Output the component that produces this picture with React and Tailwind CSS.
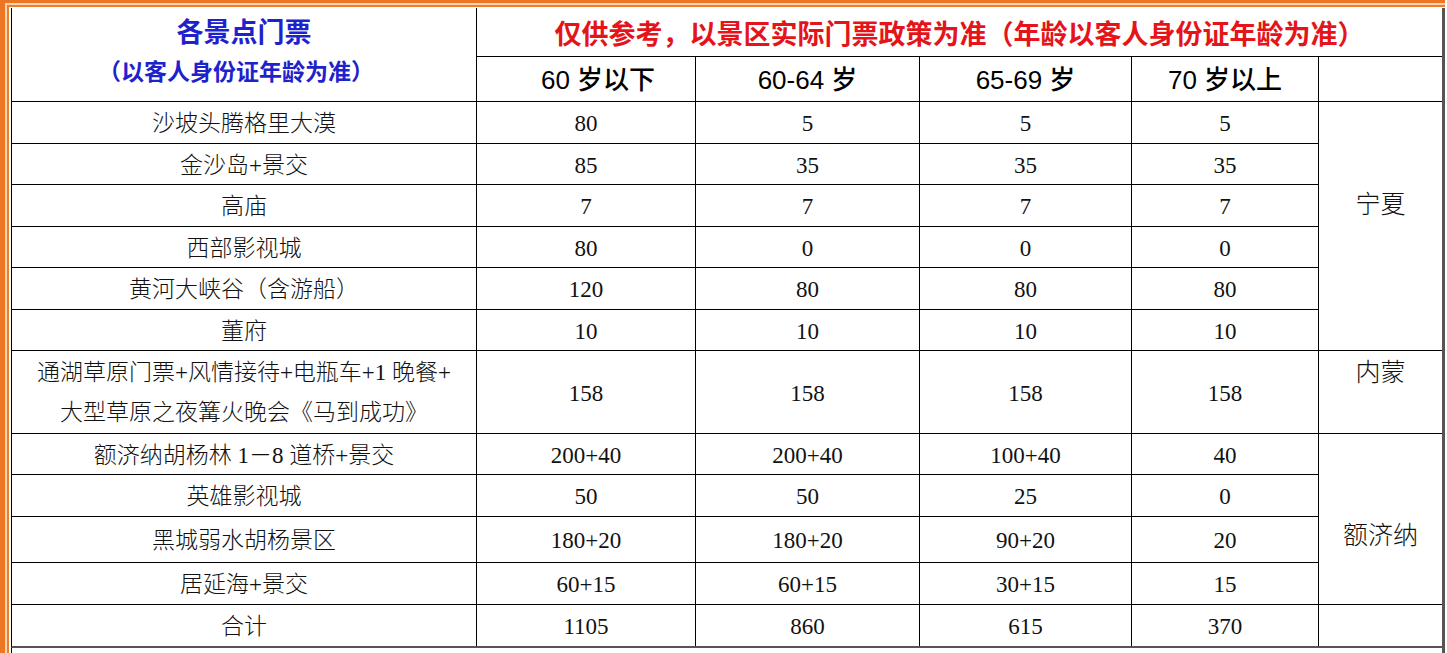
import React from 'react';

const ROWS = [
  ['沙坡头腾格里大漠', '80', '5', '5', '5'],
  ['金沙岛+景交', '85', '35', '35', '35'],
  ['高庙', '7', '7', '7', '7'],
  ['西部影视城', '80', '0', '0', '0'],
  ['黄河大峡谷（含游船）', '120', '80', '80', '80'],
  ['董府', '10', '10', '10', '10'],
  ['通湖草原门票+风情接待+电瓶车+1 晚餐+|大型草原之夜篝火晚会《马到成功》', '158', '158', '158', '158'],
  ['额济纳胡杨林 1－8 道桥+景交', '200+40', '200+40', '100+40', '40'],
  ['英雄影视城', '50', '50', '25', '0'],
  ['黑城弱水胡杨景区', '180+20', '180+20', '90+20', '20'],
  ['居延海+景交', '60+15', '60+15', '30+15', '15'],
  ['合计', '1105', '860', '615', '370'],
];

// region column, keyed by the row index it starts on
const REGIONS = {
  0: { label: '宁夏', span: 'row-span-6', pad: 'pt-[88px]' },
  6: { label: '内蒙', span: '', pad: 'pt-[7px]' },
  7: { label: '额济纳', span: 'row-span-4', pad: 'pt-[87px]' },
  11: { label: '', span: '', pad: '' },
};

const AGES = [
  { label: '60 岁以下', cls: 'pl-[24px]' },
  { label: '60-64 岁', cls: '' },
  { label: '65-69 岁', cls: '' },
  { label: '70 岁以上', cls: '' },
  { label: '', cls: '' },
];

function Cell({ children, className = '' }) {
  return (
    <div className={`bg-white flex items-center justify-center text-center ${className}`}>
      {children}
    </div>
  );
}

export default function App() {
  const cells = [];
  ROWS.forEach((row, i) => {
    row.forEach((val, j) => {
      const lines = val.split('|');
      cells.push(
        <Cell key={`${i}-${j}`} className={lines.length > 1 ? 'leading-[40px] pt-[2px]' : 'leading-[1.2] pt-[3px]'}>
          <div>
            {lines.map((l, k) => (
              <div key={k}>{l}</div>
            ))}
          </div>
        </Cell>
      );
    });
    const r = REGIONS[i];
    if (r) {
      cells.push(
        <div key={`r-${i}`} className={`bg-white flex justify-center items-start text-[25px] leading-[30px] ${r.span} ${r.pad}`}>
          {r.label}
        </div>
      );
    }
  });

  return (
    <div className="min-h-screen bg-white text-[#111] font-light font-['Liberation_Serif','Noto_Sans_CJK_SC',serif]">
      {/* orange double frame */}
      <div className="w-fit border-l-[5px] border-t-[3px] border-[#ec7623]">
        <div className="bg-[#fbd3b0] pl-[2px] pt-[2px]">
          <div className="border-l-[2px] border-t-[2px] border-[#ee7d2c]">
            <div className="bg-white pl-[2px] pt-[1px]">
              <div className="grid grid-cols-[464px_218px_223px_211px_186px_123px] grid-rows-[48px_44px_41px_40px_41px_40px_41px_40px_82px_40px_41px_45px_41px_41px] gap-px bg-black border-l border-black border-r-[3px] border-r-[#555] border-b-2 border-b-[#555] text-[23px]">
                {/* header */}
                <div className="row-span-2 bg-white flex flex-col items-center pt-[9px] text-[#1e22cc] font-bold font-['Liberation_Sans','Noto_Sans_CJK_SC',sans-serif]">
                  <div className="text-[27px] leading-[32px]">各景点门票</div>
                  <div className="text-[23px] leading-[26px] mt-[10px] pr-[16px]">（以客人身份证年龄为准）</div>
                </div>
                <div className="col-span-5 bg-white flex items-center justify-center pt-[6px] text-[27px] font-bold text-[#e5141b] font-['Liberation_Sans','Noto_Sans_CJK_SC',sans-serif]">
                  仅供参考，以景区实际门票政策为准（年龄以客人身份证年龄为准）
                </div>
                {AGES.map((h, i) => (
                  <Cell key={`h-${i}`} className={`text-[26px] font-medium text-black pt-[2px] font-['Liberation_Sans','Noto_Sans_CJK_SC',sans-serif] ${h.cls}`}>
                    {h.label}
                  </Cell>
                ))}
                {cells}
              </div>
              <div className="h-[20px] border-l border-black border-r-[3px] border-r-[#555]" />
            </div>
          </div>
        </div>
      </div>
    </div>
  );
}
